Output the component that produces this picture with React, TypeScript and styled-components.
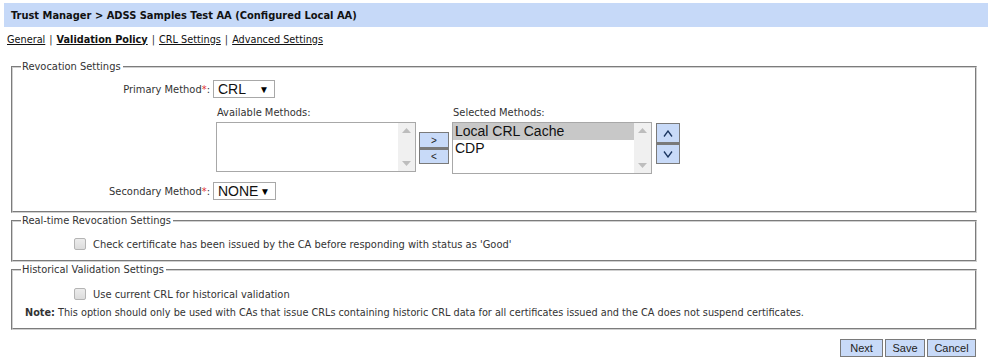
import React from "react";
import styled, { createGlobalStyle } from "styled-components";

const Global = createGlobalStyle`
  html, body { margin: 0; padding: 0; background: #fff; }
  body { font-family: "DejaVu Sans Condensed", "DejaVu Sans", sans-serif; font-size: 11px; color: #222; }
`;

const Page = styled.div`
  width: 988px;
  padding: 3px 0 0 4px;
  box-sizing: border-box;
`;

const Header = styled.div`
  height: 24px;
  background: #c6d9f8;
  display: flex;
  align-items: center;
  padding-left: 7px;
  font-weight: bold;
  font-size: 11px;
  color: #111;
`;

const Tabs = styled.div`
  margin-top: 4px;
  padding-left: 3px;
  font-size: 10.8px;
  color: #333;
  display: flex;
  gap: 4px;
  height: 16px;
  align-items: center;
`;

const Tab = styled.a<{ $active?: boolean }>`
  color: #111;
  text-decoration: underline;
  font-weight: ${(p) => (p.$active ? "bold" : "normal")};
  cursor: pointer;
`;

const Content = styled.div`
  margin: 13px 11px 0 7px;
  display: flex;
  flex-direction: column;
  gap: 1px;
`;

const Fieldset = styled.fieldset<{ $pt: number; $pb: number }>`
  margin: 0;
  border: 2px groove #d0d0d0;
  padding: ${(p) => p.$pt}px 0 ${(p) => p.$pb}px 0;
  min-width: 0;
`;

const Legend = styled.legend`
  margin-left: 8px;
  padding: 0 2px 0 1px;
  font-size: 11px;
  color: #333;
  line-height: 13px;
`;

const RevGrid = styled.div`
  display: grid;
  grid-template-columns: 197px auto;
  column-gap: 3px;
  row-gap: 0;
  align-items: center;
`;

const Label = styled.div`
  text-align: right;
  color: #333;
`;

const Req = styled.span`
  color: #e03030;
`;

const SelectBox = styled.div<{ $w: number }>`
  width: ${(p) => p.$w}px;
  height: 18px;
  box-sizing: border-box;
  border: 1px solid #a8a8a8;
  display: flex;
  align-items: center;
  justify-content: space-between;
  padding: 0 5px 0 4px;
  font-family: "Liberation Sans", Arial, sans-serif;
  font-size: 14px;
  color: #111;
  background: #fff;
`;

const Caret = styled.span`
  font-size: 10px;
  color: #000;
`;

const Methods = styled.div`
  display: flex;
  align-items: flex-start;
  margin: 8px 0 8px 3px;
`;

const MethodCol = styled.div<{ $ml?: number }>`
  display: flex;
  flex-direction: column;
  gap: 3px;
  margin-left: ${(p) => p.$ml ?? 0}px;
`;

const ColLabel = styled.div`
  color: #333;
  height: 13px;
  line-height: 13px;
  padding-left: 1px;
`;

const ListBox = styled.div<{ $h: number }>`
  width: 200px;
  height: ${(p) => p.$h}px;
  box-sizing: border-box;
  border: 1px solid #a8a8a8;
  display: flex;
  background: #fff;
`;

const ListItems = styled.div`
  flex: 1;
  display: flex;
  flex-direction: column;
`;

const ListItem = styled.div<{ $sel?: boolean }>`
  height: 17px;
  line-height: 17px;
  padding-left: 2px;
  font-family: "Liberation Sans", Arial, sans-serif;
  font-size: 14px;
  color: #111;
  background: ${(p) => (p.$sel ? "#c8c8c8" : "transparent")};
`;

const Scrollbar = styled.div`
  width: 17px;
  background: #f0f0f0;
  display: flex;
  flex-direction: column;
  justify-content: space-between;
  align-items: center;
  padding: 5px 0;
  box-sizing: border-box;
`;

const ScrollArrow = styled.svg`
  display: block;
`;

const ButtonStack = styled.div<{ $mt: number; $ml: number }>`
  display: flex;
  flex-direction: column;
  margin-top: ${(p) => p.$mt}px;
  margin-left: ${(p) => p.$ml}px;
`;

const MoveButton = styled.button<{ $w: number; $h: number }>`
  width: ${(p) => p.$w}px;
  height: ${(p) => p.$h}px;
  box-sizing: border-box;
  border: 1px solid #7a7a7a;
  background: #c8daf8;
  margin: 0;
  padding: 0;
  display: flex;
  align-items: center;
  justify-content: center;
  font-family: "Liberation Sans", Arial, sans-serif;
  font-size: 10px;
  color: #222;
  & + & {
    border-top: 2px solid #7a7a7a;
  }
`;

const CheckRow = styled.div`
  display: flex;
  align-items: center;
  padding-left: 61px;
  gap: 7px;
  height: 14px;
`;

const Check = styled.span`
  width: 12px;
  height: 12px;
  box-sizing: border-box;
  border: 1px solid #b4b4b4;
  border-radius: 2px;
  background: linear-gradient(#ececec, #dcdcdc);
`;

const CheckText = styled.span`
  color: #333;
`;

const Note = styled.div`
  margin-top: 5px;
  padding-left: 12px;
  color: #333;
  font-size: 10.8px;
`;

const Footer = styled.div`
  margin: 9px 12px 0 0;
  display: flex;
  justify-content: flex-end;
  gap: 2px;
`;

const ActionButton = styled.button<{ $w: number }>`
  width: ${(p) => p.$w}px;
  height: 18px;
  box-sizing: border-box;
  border: 1px solid #7a7a7a;
  background: #c8daf8;
  font-family: "Liberation Sans", Arial, sans-serif;
  font-size: 11px;
  color: #222;
  padding: 0;
`;

const Up = () => (
  <ScrollArrow width="9" height="5" viewBox="0 0 9 5">
    <path d="M0 5 L4.5 0 L9 5 Z" fill="#bdbdbd" />
  </ScrollArrow>
);
const Down = () => (
  <ScrollArrow width="9" height="5" viewBox="0 0 9 5">
    <path d="M0 0 L4.5 5 L9 0 Z" fill="#bdbdbd" />
  </ScrollArrow>
);

const Chevron = ({ up }: { up?: boolean }) => (
  <svg width="10" height="7" viewBox="0 0 10 7">
    <path
      d={up ? "M1 6.5 L5 1 L9 6.5" : "M1 0.5 L5 6 L9 0.5"}
      fill="none"
      stroke="#1a3560"
      strokeWidth="1.3"
    />
  </svg>
);

export default function App() {
  return (
    <>
      <Global />
      <Page>
        <Header>Trust Manager &gt; ADSS Samples Test AA (Configured Local AA)</Header>
        <Tabs>
          <Tab>General</Tab>|<Tab $active>Validation Policy</Tab>|<Tab>CRL Settings</Tab>|
          <Tab>Advanced Settings</Tab>
        </Tabs>
        <Content>
          <Fieldset $pt={7} $pb={11}>
            <Legend>Revocation Settings</Legend>
            <RevGrid>
              <Label>
                Primary Method<Req>*</Req>:
              </Label>
              <SelectBox $w={62}>
                CRL<Caret>▼</Caret>
              </SelectBox>
              <div />
              <Methods>
                <MethodCol>
                  <ColLabel>Available Methods:</ColLabel>
                  <ListBox $h={50}>
                    <ListItems />
                    <Scrollbar>
                      <Up />
                      <Down />
                    </Scrollbar>
                  </ListBox>
                </MethodCol>
                <ButtonStack $mt={26} $ml={3}>
                  <MoveButton $w={30} $h={16}>&gt;</MoveButton>
                  <MoveButton $w={30} $h={16}>&lt;</MoveButton>
                </ButtonStack>
                <MethodCol $ml={3}>
                  <ColLabel>Selected Methods:</ColLabel>
                  <ListBox $h={52}>
                    <ListItems>
                      <ListItem $sel>Local CRL Cache</ListItem>
                      <ListItem>CDP</ListItem>
                    </ListItems>
                    <Scrollbar>
                      <Up />
                      <Down />
                    </Scrollbar>
                  </ListBox>
                </MethodCol>
                <ButtonStack $mt={17} $ml={4}>
                  <MoveButton $w={24} $h={20}>
                    <Chevron up />
                  </MoveButton>
                  <MoveButton $w={24} $h={21}>
                    <Chevron />
                  </MoveButton>
                </ButtonStack>
              </Methods>
              <Label>
                Secondary Method<Req>*</Req>:
              </Label>
              <SelectBox $w={63}>
                NONE<Caret>▼</Caret>
              </SelectBox>
            </RevGrid>
          </Fieldset>
          <Fieldset $pt={10} $pb={9}>
            <Legend>Real-time Revocation Settings</Legend>
            <CheckRow>
              <Check />
              <CheckText>Check certificate has been issued by the CA before responding with status as 'Good'</CheckText>
            </CheckRow>
          </Fieldset>
          <Fieldset $pt={11} $pb={9}>
            <Legend>Historical Validation Settings</Legend>
            <CheckRow>
              <Check />
              <CheckText>Use current CRL for historical validation</CheckText>
            </CheckRow>
            <Note>
              <b>Note:</b> This option should only be used with CAs that issue CRLs containing historic CRL data for
              all certificates issued and the CA does not suspend certificates.
            </Note>
          </Fieldset>
        </Content>
        <Footer>
          <ActionButton $w={43}>Next</ActionButton>
          <ActionButton $w={40}>Save</ActionButton>
          <ActionButton $w={49}>Cancel</ActionButton>
        </Footer>
      </Page>
    </>
  );
}
